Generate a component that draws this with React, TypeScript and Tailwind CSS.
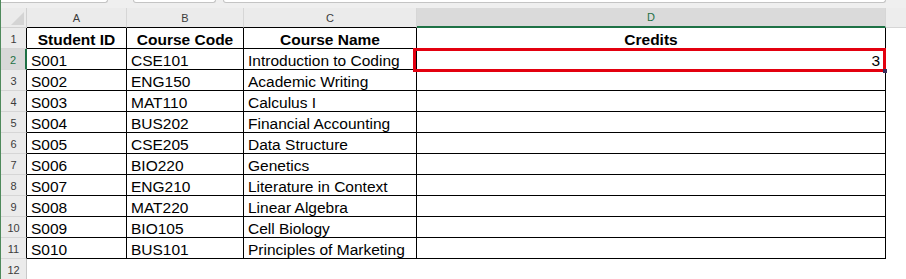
import React from 'react';

const rows = [
  ['S001', 'CSE101', 'Introduction to Coding', '3'],
  ['S002', 'ENG150', 'Academic Writing', ''],
  ['S003', 'MAT110', 'Calculus I', ''],
  ['S004', 'BUS202', 'Financial Accounting', ''],
  ['S005', 'CSE205', 'Data Structure', ''],
  ['S006', 'BIO220', 'Genetics', ''],
  ['S007', 'ENG210', 'Literature in Context', ''],
  ['S008', 'MAT220', 'Linear Algebra', ''],
  ['S009', 'BIO105', 'Cell Biology', ''],
  ['S010', 'BUS101', 'Principles of Marketing', ''],
];

const font = { fontFamily: '"Liberation Sans", Arial, sans-serif' };

const ColHead: React.FC<{ label: string; active?: boolean }> = ({ label, active }) => (
  <div
    className={`h-[20px] flex items-end justify-center pb-[3px] text-[11px] leading-[12px] border-r border-[#d6d6d6] ${
      active ? 'bg-[#dadada] text-[#1e7145] border-b-2 border-b-[#1e7145]' : 'bg-[#ebebeb] text-[#3c3c3c] border-b border-b-black'
    }`}
  >
    {label}
  </div>
);

const RowHead: React.FC<{ n: number; active?: boolean; inTable?: boolean }> = ({ n, active, inTable }) => (
  <div
    className={`h-[21px] flex items-end justify-center pb-[3px] text-[11px] leading-[12px] border-b border-b-[#d6d6d6] ${
      active
        ? 'bg-[#d8d8d8] text-[#1e7145] border-r-2 border-r-[#1e7145]'
        : inTable
        ? 'bg-[#ebebeb] text-[#3c3c3c] border-r border-r-black'
        : 'bg-[#ebebeb] text-[#3c3c3c] border-r border-r-[#c8c8c8]'
    }`}
  >
    {n}
  </div>
);

const Cell: React.FC<{ children?: React.ReactNode; bold?: boolean; align?: 'left' | 'center' | 'right' }> = ({
  children,
  bold,
  align = 'left',
}) => (
  <div
    className={`h-[21px] flex items-end border-r border-b border-black bg-white text-[15.5px] leading-[16px] text-black whitespace-nowrap overflow-hidden ${
      bold ? 'font-bold' : ''
    } ${align === 'center' ? 'justify-center' : align === 'right' ? 'justify-end pr-[5px]' : 'justify-start pl-[4px]'}`}
  >
    {children}
  </div>
);

export default function App() {
  return (
    <div className="w-[906px] h-[279px] overflow-hidden bg-white border-l border-[#4f8a5c]" style={font}>
      {/* formula bar remnants */}
      <div className="h-[8px] bg-[#efefef] flex items-start">
        <div className="w-[107px] h-[3px] bg-white border-b border-r border-[#c4c4c4] rounded-br-[3px]" />
        <div className="ml-[25px] w-[83px] h-[3px] bg-white border-b border-x border-[#c4c4c4] rounded-b-[3px]" />
        <div className="ml-[7px] w-[663px] h-[3px] bg-white border-b border-x border-[#c4c4c4] rounded-b-[3px]" />
      </div>

      <div className="grid grid-cols-[26px_100px_117px_173px_469px_1fr]">
        {/* column headers */}
        <div className="h-[20px] bg-[#ebebeb] border-r border-b border-[#d0d0d0] flex items-end justify-end pr-[2px] pb-[2px]">
          <svg width="13" height="13" viewBox="0 0 13 13">
            <polygon points="13,0 13,13 0,13" fill="#d4d4d4" />
          </svg>
        </div>
        <ColHead label="A" />
        <ColHead label="B" />
        <ColHead label="C" />
        <ColHead label="D" active />
        <div className="h-[20px] bg-[#ededed] border-b border-[#d6d6d6]" />

        {/* header row */}
        <RowHead n={1} inTable />
        <Cell bold align="center">Student ID</Cell>
        <Cell bold align="center">Course Code</Cell>
        <Cell bold align="center">Course Name</Cell>
        <Cell bold align="center">Credits</Cell>
        <div className="h-[21px] bg-white" />

        {rows.map((r, i) => (
          <React.Fragment key={r[0]}>
            <RowHead n={i + 2} inTable active={i === 0} />
            <Cell>{r[0]}</Cell>
            <Cell>{r[1]}</Cell>
            <Cell>{r[2]}</Cell>
            {i === 0 ? (
              <div className="relative">
                <Cell align="right">{r[3]}</Cell>
                <div className="absolute -left-[4px] -top-[1px] right-0 -bottom-[2px] border-[3px] border-[#e3000f] z-10" />
                <div className="absolute -right-[1px] -bottom-[3px] w-[4px] h-[4px] bg-[#3a2f5c] z-20" />
              </div>
            ) : (
              <Cell align="right">{r[3]}</Cell>
            )}
            <div className="h-[21px] bg-white" />
          </React.Fragment>
        ))}

        <RowHead n={12} />
        <div className="h-[21px] col-span-5 bg-white" />
      </div>
    </div>
  );
}
